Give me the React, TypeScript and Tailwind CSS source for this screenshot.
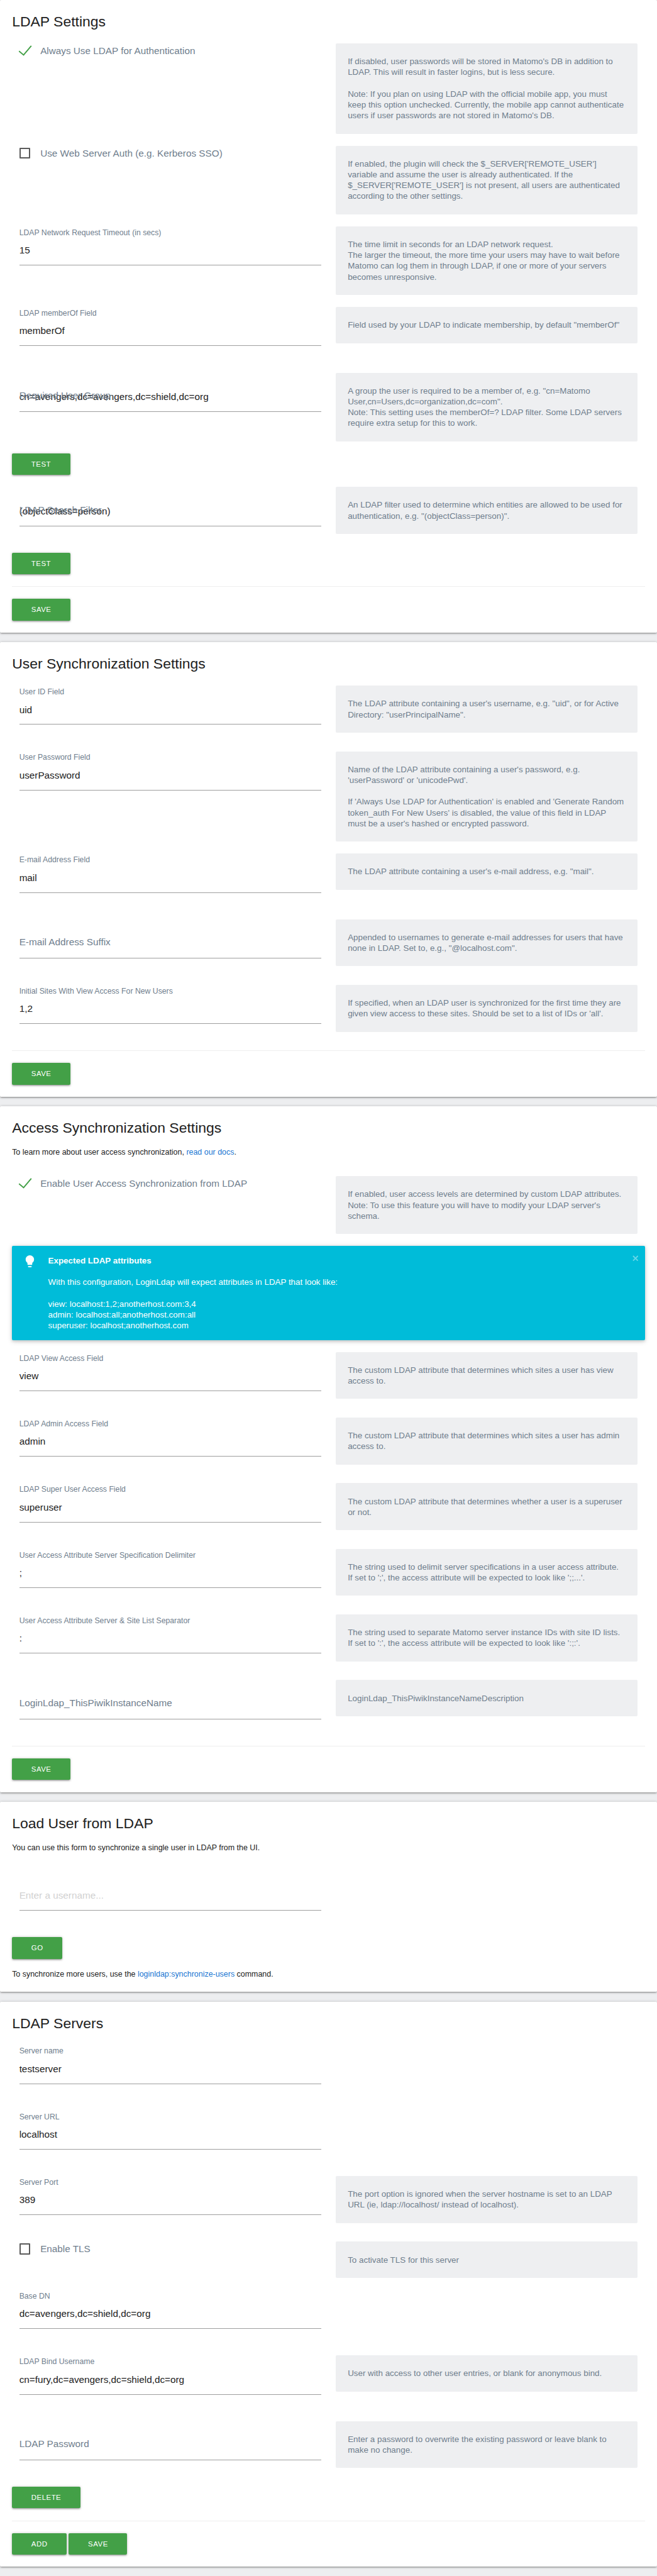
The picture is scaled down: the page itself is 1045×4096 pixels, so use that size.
import type { ReactNode } from "react";

function Title({ children }: { children: ReactNode }) {
  return <h2 className="text-[24px] leading-[32px] text-[#212121]">{children}</h2>;
}

function Card({ children }: { children: ReactNode }) {
  return (
    <section className="rounded-[2px] bg-white p-[20px] shadow-[0_2px_2px_0_rgba(0,0,0,0.14),0_3px_1px_-2px_rgba(0,0,0,0.12),0_1px_5px_0_rgba(0,0,0,0.2)]">
      {children}
    </section>
  );
}

function Row({ left, help }: { left: ReactNode; help?: ReactNode }) {
  return (
    <div className="mb-[20px] grid grid-cols-2 items-start">
      <div className="px-[12px]">{left}</div>
      <div className="px-[12px]">
        {help && (
          <div className="rounded-[2px] bg-[#eeeff1] px-[20px] py-[21px] text-[14px] leading-[18px] whitespace-pre text-[#6f7e8d]">
            {help}
          </div>
        )}
      </div>
    </div>
  );
}

type FieldProps = {
  label?: string;
  value?: string;
  placeholder?: string;
  resting?: boolean;
  help?: string;
};

function Field({ label, value, placeholder, resting, help }: FieldProps) {
  return (
    <Row
      help={help}
      left={
        <div className="relative h-[89px] pt-[16px]">
          <div className="h-[49px] border-b border-[#9e9e9e] text-[16px] leading-[48px] whitespace-pre text-[#212121]">
            {value}
            {placeholder && <span className="text-[#d1d1d1]">{placeholder}</span>}
          </div>
          {label && (
            <span
              className={
                resting
                  ? "absolute top-[28px] left-0 text-[16px] leading-[20px] whitespace-nowrap text-[#6f7e8d]"
                  : "absolute top-[2px] left-0 text-[12.8px] leading-[17px] whitespace-nowrap text-[#6f7e8d]"
              }
            >
              {label}
            </span>
          )}
        </div>
      }
    />
  );
}

function Toggle({ label, checked, help }: { label: string; checked?: boolean; help: string }) {
  return (
    <Row
      help={help}
      left={
        <div className="relative flex h-[25px] items-center pl-[35px] text-[16px] leading-[25px] whitespace-nowrap text-[#6f7e8d]">
          {checked ? (
            <svg className="absolute top-0 -left-[4px] h-[25px] w-[28px]" viewBox="0 0 28 25" fill="none">
              <path d="M3.4 12.9 L11 19.3 L23.8 4" stroke="#43a047" strokeWidth="2" />
            </svg>
          ) : (
            <span className="absolute top-[3px] left-0 size-[18px] rounded-[1px] border-[2.1px] border-[#5a5a5a]" />
          )}
          {label}
        </div>
      }
    />
  );
}

function Button({ children }: { children: ReactNode }) {
  return (
    <button className="h-[36px] rounded-[2px] bg-[#43a047] px-[32px] text-[12px] leading-[36px] tracking-[0.5px] text-white uppercase shadow-[0_2px_2px_0_rgba(0,0,0,0.14),0_3px_1px_-2px_rgba(0,0,0,0.12),0_1px_5px_0_rgba(0,0,0,0.2)]">
      {children}
    </button>
  );
}

function Footer({ children }: { children: ReactNode }) {
  return <div className="flex gap-[3.6px] border-t border-[#eeeeee] pt-[20px]">{children}</div>;
}

function Notice() {
  return (
    <div className="relative mb-[20px] rounded-[2px] bg-[#00bcd9] py-[15px] pl-[60px] text-[14px] leading-[18px] text-white shadow-[0_2px_5px_0_rgba(0,0,0,0.16),0_2px_10px_0_rgba(0,0,0,0.12)]">
      <svg className="absolute top-[13px] left-[18px] size-[24px]" viewBox="0 0 24 24" fill="currentColor">
        <path d="M9 21c0 .55.45 1 1 1h4c.55 0 1-.45 1-1v-1H9v1zm3-19C8.14 2 5 5.14 5 9c0 2.38 1.19 4.47 3 5.74V17c0 .55.45 1 1 1h6c.55 0 1-.45 1-1v-2.26c1.81-1.27 3-3.36 3-5.74 0-3.86-3.14-7-7-7z" />
      </svg>
      <svg className="absolute top-[15px] right-[11px] size-[10px] opacity-40" viewBox="0 0 10 10" fill="none" stroke="currentColor" strokeWidth="2">
        <path d="M1 1l8 8M9 1l-8 8" />
      </svg>
      <strong className="block font-bold">Expected LDAP attributes</strong>
      <p className="mt-[18px]">With this configuration, LoginLdap will expect attributes in LDAP that look like:</p>
      <p className="mt-[18px]">view: localhost:1,2;anotherhost.com:3,4</p>
      <p>admin: localhost:all;anotherhost.com:all</p>
      <p>superuser: localhost;anotherhost.com</p>
    </div>
  );
}

export default function App() {
  return (
    <div className="flex flex-col gap-[16px] bg-[#edeef0] pb-[16px] font-['Liberation_Sans',Arial,sans-serif] text-[13px] text-[#212121] [zoom:0.9572]">
      <Card>
        <Title>LDAP Settings</Title>
        <div className="mt-[20px]">
          <Toggle
            checked
            label="Always Use LDAP for Authentication"
            help={"If disabled, user passwords will be stored in Matomo's DB in addition to\nLDAP. This will result in faster logins, but is less secure.\n\nNote: If you plan on using LDAP with the official mobile app, you must\nkeep this option unchecked. Currently, the mobile app cannot authenticate\nusers if user passwords are not stored in Matomo's DB."}
          />
          <Toggle
            label="Use Web Server Auth (e.g. Kerberos SSO)"
            help={"If enabled, the plugin will check the $_SERVER['REMOTE_USER']\nvariable and assume the user is already authenticated. If the\n$_SERVER['REMOTE_USER'] is not present, all users are authenticated\naccording to the other settings."}
          />
          <Field
            label="LDAP Network Request Timeout (in secs)"
            value="15"
            help={"The time limit in seconds for an LDAP network request.\nThe larger the timeout, the more time your users may have to wait before\nMatomo can log them in through LDAP, if one or more of your servers\nbecomes unresponsive."}
          />
          <Field label="LDAP memberOf Field" value="memberOf" help={'Field used by your LDAP to indicate membership, by default "memberOf"'} />
          <Field
            resting
            label="Required User Group"
            value="cn=avengers,dc=avengers,dc=shield,dc=org"
            help={'A group the user is required to be a member of, e.g. "cn=Matomo\nUser,cn=Users,dc=organization,dc=com".\nNote: This setting uses the memberOf=? LDAP filter. Some LDAP servers\nrequire extra setup for this to work.'}
          />
          <div className="mb-[20px] flex">
            <Button>Test</Button>
          </div>
          <Field
            resting
            label="LDAP Search Filter"
            value="(objectClass=person)"
            help={'An LDAP filter used to determine which entities are allowed to be used for\nauthentication, e.g. "(objectClass=person)".'}
          />
          <div className="mb-[20px] flex">
            <Button>Test</Button>
          </div>
        </div>
        <Footer>
          <Button>Save</Button>
        </Footer>
      </Card>

      <Card>
        <Title>User Synchronization Settings</Title>
        <div className="mt-[20px]">
          <Field label="User ID Field" value="uid" help={'The LDAP attribute containing a user\'s username, e.g. "uid", or for Active\nDirectory: "userPrincipalName".'} />
          <Field
            label="User Password Field"
            value="userPassword"
            help={"Name of the LDAP attribute containing a user's password, e.g.\n'userPassword' or 'unicodePwd'.\n\nIf 'Always Use LDAP for Authentication' is enabled and 'Generate Random\ntoken_auth For New Users' is disabled, the value of this field in LDAP\nmust be a user's hashed or encrypted password."}
          />
          <Field label="E-mail Address Field" value="mail" help={'The LDAP attribute containing a user\'s e-mail address, e.g. "mail".'} />
          <Field
            resting
            label="E-mail Address Suffix"
            help={'Appended to usernames to generate e-mail addresses for users that have\nnone in LDAP. Set to, e.g., "@localhost.com".'}
          />
          <Field
            label="Initial Sites With View Access For New Users"
            value="1,2"
            help={"If specified, when an LDAP user is synchronized for the first time they are\ngiven view access to these sites. Should be set to a list of IDs or 'all'."}
          />
        </div>
        <Footer>
          <Button>Save</Button>
        </Footer>
      </Card>

      <Card>
        <Title>Access Synchronization Settings</Title>
        <p className="mt-[15px] mb-[29px] leading-[20px]">
          To learn more about user access synchronization, <a className="text-[#1976d2]">read our docs</a>.
        </p>
        <Toggle
          checked
          label="Enable User Access Synchronization from LDAP"
          help={"If enabled, user access levels are determined by custom LDAP attributes.\nNote: To use this feature you will have to modify your LDAP server's\nschema."}
        />
        <Notice />
        <Field label="LDAP View Access Field" value="view" help={"The custom LDAP attribute that determines which sites a user has view\naccess to."} />
        <Field label="LDAP Admin Access Field" value="admin" help={"The custom LDAP attribute that determines which sites a user has admin\naccess to."} />
        <Field label="LDAP Super User Access Field" value="superuser" help={"The custom LDAP attribute that determines whether a user is a superuser\nor not."} />
        <Field
          label="User Access Attribute Server Specification Delimiter"
          value=";"
          help={"The string used to delimit server specifications in a user access attribute.\nIf set to ';', the access attribute will be expected to look like ';;...'."}
        />
        <Field
          label="User Access Attribute Server & Site List Separator"
          value=":"
          help={"The string used to separate Matomo server instance IDs with site ID lists.\nIf set to ':', the access attribute will be expected to look like ':;:'."}
        />
        <Field resting label="LoginLdap_ThisPiwikInstanceName" help="LoginLdap_ThisPiwikInstanceNameDescription" />
        <Footer>
          <Button>Save</Button>
        </Footer>
      </Card>

      <Card>
        <Title>Load User from LDAP</Title>
        <p className="mt-[15px] mb-[29px] leading-[20px]">You can use this form to synchronize a single user in LDAP from the UI.</p>
        <Field placeholder="Enter a username..." />
        <div className="flex">
          <Button>Go</Button>
        </div>
        <p className="mt-[16px] -mb-[1px] leading-[20px]">
          To synchronize more users, use the <a className="text-[#1976d2]">loginldap:synchronize-users</a> command.
        </p>
      </Card>

      <Card>
        <Title>LDAP Servers</Title>
        <div className="mt-[20px]">
          <Field label="Server name" value="testserver" />
          <Field label="Server URL" value="localhost" />
          <Field
            label="Server Port"
            value="389"
            help={"The port option is ignored when the server hostname is set to an LDAP\nURL (ie, ldap://localhost/ instead of localhost)."}
          />
          <Toggle label="Enable TLS" help="To activate TLS for this server" />
          <Field label="Base DN" value="dc=avengers,dc=shield,dc=org" />
          <Field label="LDAP Bind Username" value="cn=fury,dc=avengers,dc=shield,dc=org" help="User with access to other user entries, or blank for anonymous bind." />
          <Field resting label="LDAP Password" help={"Enter a password to overwrite the existing password or leave blank to\nmake no change."} />
          <div className="mb-[20px] flex">
            <Button>Delete</Button>
          </div>
        </div>
        <Footer>
          <Button>Add</Button>
          <Button>Save</Button>
        </Footer>
      </Card>
    </div>
  );
}
